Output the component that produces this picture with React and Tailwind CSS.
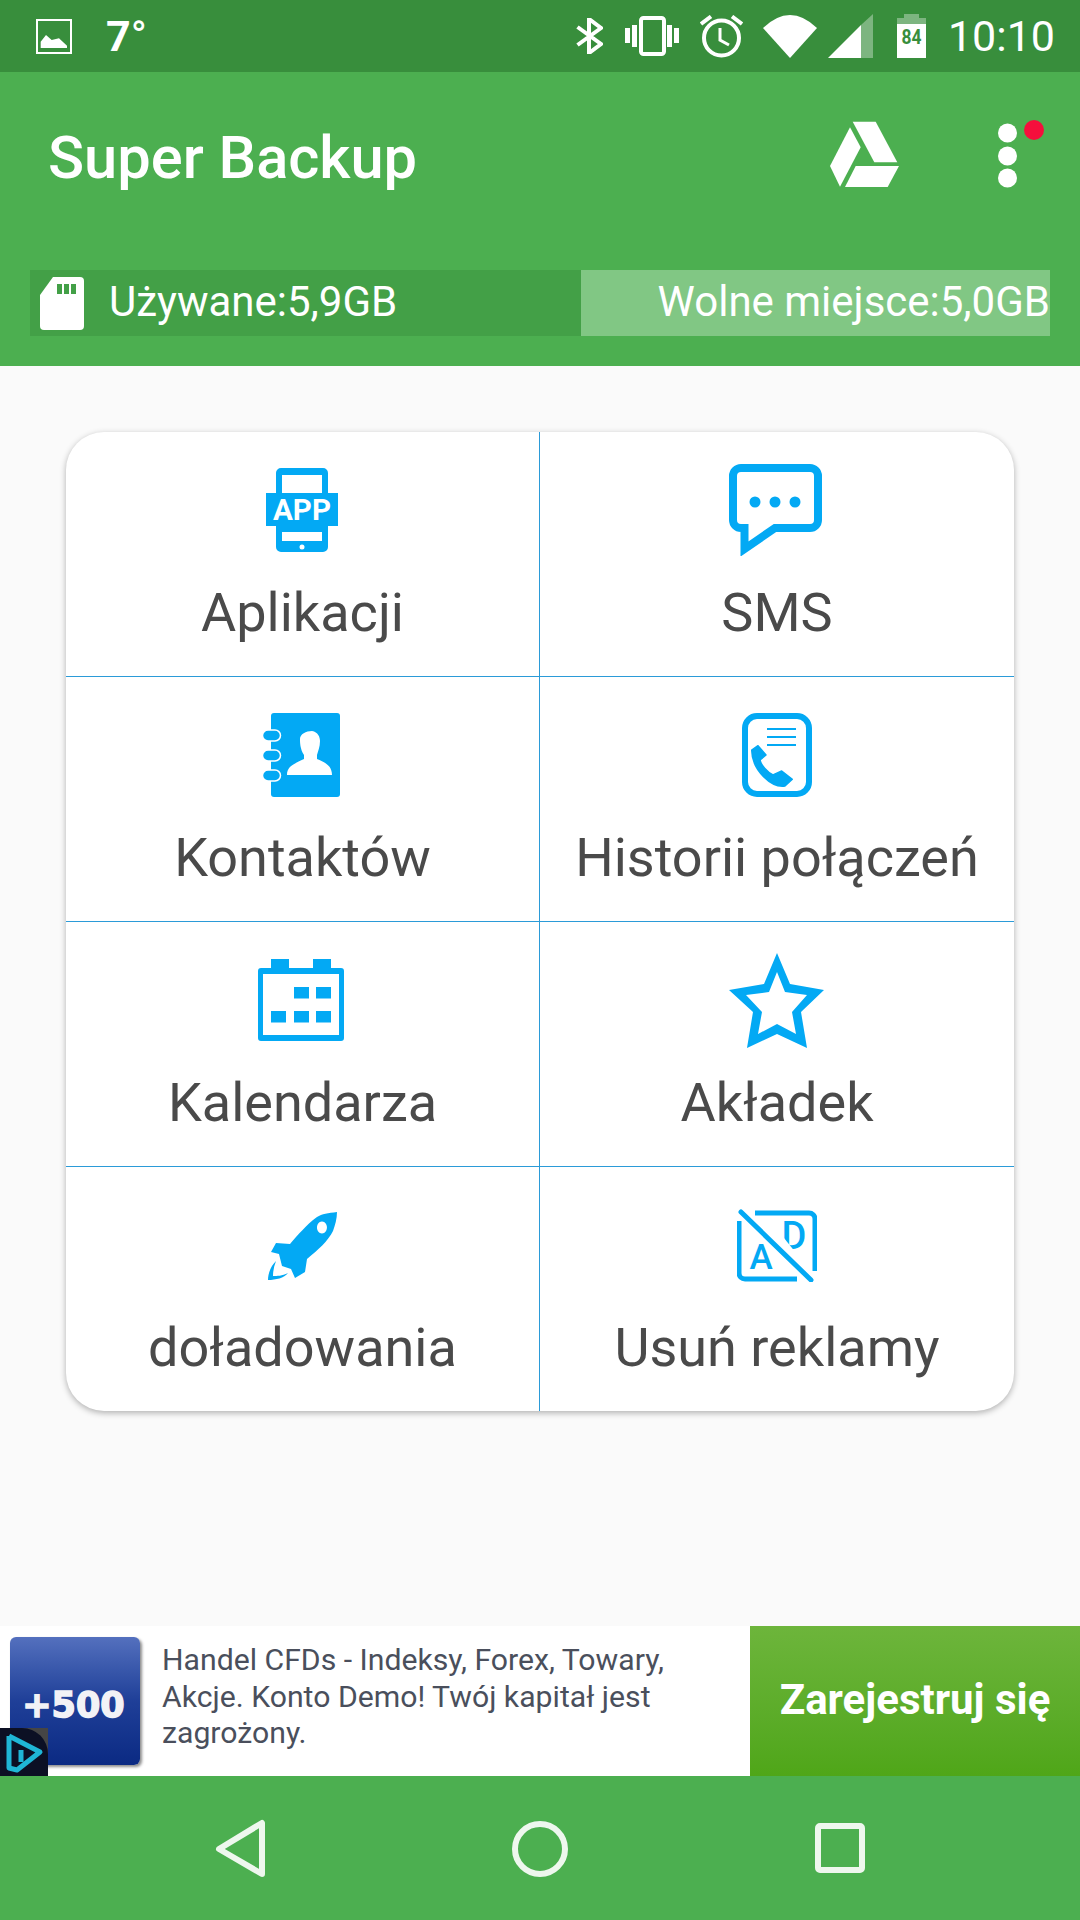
const BLUE = "#03A9F4";

function AppIcon() {
  return (
    <svg className="mr-[2px]" width="72" height="84" viewBox="0 0 72 84">
      <path fillRule="evenodd" fill={BLUE} d="M15 0H57a5 5 0 0 1 5 5V79a5 5 0 0 1-5 5H15a5 5 0 0 1-5-5V5a5 5 0 0 1 5-5ZM16 7V25H56V7ZM16 64V73H56V64Z" />
      <rect x="0" y="25" width="72" height="33" fill={BLUE} />
      <circle cx="36" cy="79" r="2.5" fill="#fff" />
      <text x="36" y="52" textAnchor="middle" fontFamily="Roboto" fontWeight="700" fontSize="29" textLength="58" lengthAdjust="spacingAndGlyphs" fill="#fff">APP</text>
    </svg>
  );
}
function SmsIcon() {
  return (
    <svg className="mr-[3px]" width="93" height="92" viewBox="0 0 93 92">
      <path fill="none" stroke={BLUE} strokeWidth="8" strokeMiterlimit="8" d="M15.5 64H12a8 8 0 0 1-8-8V12a8 8 0 0 1 8-8H81a8 8 0 0 1 8 8V56a8 8 0 0 1-8 8H46L15.5 85Z" />
      <circle cx="26" cy="38" r="5.5" fill={BLUE} />
      <circle cx="46" cy="38" r="5.5" fill={BLUE} />
      <circle cx="66" cy="38" r="5.5" fill={BLUE} />
    </svg>
  );
}
function ContactIcon() {
  return (
    <svg className="mr-[4px]" width="78" height="84" viewBox="0 0 78 84">
      <rect x="9" y="0" width="69" height="84" rx="3" fill={BLUE} />
      {[17, 37, 57].map((y) => (
        <rect key={y} x="0.5" y={y} width="18" height="11" rx="5.5" fill={BLUE} stroke="#fff" strokeWidth="1.5" />
      ))}
      <path fill="#fff" d="M25 62C25 53 32 51 42 46V42C38 36 38 29 38 26 38 21 44 18 50 18 56 19 58 24 58 28 58 34 56 38 55 42V46C62 49 70 52 70 62Z" />
    </svg>
  );
}
function CallIcon() {
  return (
    <svg width="70" height="84" viewBox="0 0 70 84">
      <rect x="3" y="3" width="64" height="78" rx="12" fill="none" stroke={BLUE} strokeWidth="6" />
      <path d="M25 16H54M25 24H54M25 32H54" stroke={BLUE} strokeWidth="2.2" />
      <path fill={BLUE} stroke={BLUE} strokeWidth="1.5" strokeLinejoin="round" d="M9.700 37 16 32.700 24 42 18 47C19 52 25 59 31 62L39.700 58 50.300 66.300 43 73C30 75 10 58 9.700 37Z" />
    </svg>
  );
}
function CalendarIcon() {
  const squares = [[36, 28], [58, 28], [13, 52], [36, 52], [58, 52]];
  return (
    <svg className="mr-[4px]" width="86" height="82" viewBox="0 0 86 82">
      <path fill={BLUE} fillRule="evenodd" d="M13 0H31V9H55V0H73V9H83a3 3 0 0 1 3 3V79a3 3 0 0 1-3 3H3a3 3 0 0 1-3-3V12a3 3 0 0 1 3-3H13ZM5 15V76H81V15Z" />
      {squares.map(([x, y]) => (
        <rect key={`${x}-${y}`} x={x} y={y} width="15" height="11.5" fill={BLUE} />
      ))}
    </svg>
  );
}
function StarIcon() {
  return (
    <svg className="mr-[1px]" width="95" height="95" viewBox="0 0 95 95">
      <path fill={BLUE} fillRule="evenodd" d="M48 0 61 31 95 37 72 59 78 95 48 81 18 95 24 59 0 37 35 31ZM48 19 40 39 17 42 33 59 29 81 48 71 67 81 63 59 78 42 56 39Z" />
    </svg>
  );
}
function RocketIcon() {
  return (
    <svg width="69" height="69" viewBox="0 0 69 69">
      <path fill={BLUE} fillRule="evenodd" d="M69 1C60 2 54 3 49 6 38 14 30 24 22 33L8 32 3 41 11 43 14 55 23 58 27 67 37 61 39 48C50 39 60 30 65 20 67 14 69 8 69 1ZM54 10.500A5 6 0 1 1 53.900 10.500Z" />
      <path fill={BLUE} d="M8 50C3 55 0 62 0 69 8 69 16 67 20 62 14 65 9 65 5 65 5 60 6 55 8 50Z" />
    </svg>
  );
}
function NoAdsIcon() {
  return (
    <svg width="80" height="73" viewBox="0 0 80 73">
      <path fill="none" stroke={BLUE} strokeWidth="5" d="M18 4H72a6 6 0 0 1 6 6V62M60 70H8a6 6 0 0 1-6-6V12" />
      <text x="24" y="60" textAnchor="middle" fontFamily="Roboto" fontWeight="500" fontSize="35" fill={BLUE}>A</text>
      <text x="57" y="40" textAnchor="middle" fontFamily="Roboto" fontWeight="500" fontSize="38" fill={BLUE}>D</text>
      <path d="M43 24 59 44H43Z" fill="#fff" />
      <path d="M3 2 74 72" stroke="#fff" strokeWidth="11" />
      <path d="M4 3 74 71" stroke={BLUE} strokeWidth="5" strokeLinecap="round" />
    </svg>
  );
}

const items = [
  ["Aplikacji", AppIcon],
  ["SMS", SmsIcon],
  ["Kontaktów", ContactIcon],
  ["Historii połączeń", CallIcon],
  ["Kalendarza", CalendarIcon],
  ["Akładek", StarIcon],
  ["doładowania", RocketIcon],
  ["Usuń reklamy", NoAdsIcon],
];

function Cell({ label, Icon, index }) {
  const left = index % 2 === 0;
  const last = index >= 6;
  return (
    <div className={`flex flex-col items-center ${left ? "border-r border-r-[#2b9bd8]" : ""} ${last ? "" : "border-b border-b-[#2b9bd8]"}`}>
      <div className="h-[100px] mt-[28px] flex items-center justify-center">
        <Icon />
      </div>
      <div className="text-[54px] leading-[60px] mt-[23px] text-[#4a4a4a] whitespace-nowrap">{label}</div>
    </div>
  );
}

function StatusBar() {
  return (
    <div className="h-[72px] bg-[#388E3C] flex items-center text-white shrink-0">
      <svg className="ml-[36px]" width="36" height="35" viewBox="0 0 36 35">
        <rect x="1" y="1" width="34" height="33" fill="none" stroke="#fff" strokeWidth="2" />
        <path fill="#fff" d="M4.700 29V22.700L10 16 15.700 21 23 19.300 31 26.700V29Z" />
      </svg>
      <span className="ml-[34px] text-[43px] leading-[72px] font-bold">7</span>
      <span className="text-[43px] leading-[72px] font-normal">°</span>
      <div className="flex-1" />
      <svg width="27" height="36" viewBox="0 0 27 36">
        <path fill="none" stroke="#fff" strokeWidth="4" d="M1.500 9 25 26 13 35V1L25 10 1.500 27" />
      </svg>
      <svg className="ml-[22px]" width="54" height="40" viewBox="0 0 54 40">
        <rect x="16" y="2" width="23" height="36" rx="2.500" fill="none" stroke="#fff" strokeWidth="4" />
        <path fill="#fff" d="M0 12H5V27H0ZM7 9H12V31H7ZM42 9H47V31H42ZM49 12H54V27H49Z" />
      </svg>
      <svg className="ml-[21px]" width="43" height="43" viewBox="0 0 43 43">
        <circle cx="21.500" cy="23" r="17.500" fill="none" stroke="#fff" strokeWidth="4" />
        <path d="M20 13V25L29 30" fill="none" stroke="#fff" strokeWidth="3" />
        <path d="M1 9 11 1.500M42 9 32 1.500" fill="none" stroke="#fff" strokeWidth="4" />
      </svg>
      <svg className="ml-[20px]" width="54" height="43" viewBox="0 0 54 43">
        <path fill="#fff" d="M0 13Q27-13 54 13L27 43Z" />
      </svg>
      <svg className="ml-[11px]" width="45" height="44" viewBox="0 0 45 44">
        <path fill="#fff" d="M0 44 33 11V44Z" />
        <path fill="#fff" fillOpacity="0.35" d="M33 11 45 0V44H33Z" />
      </svg>
      <svg className="ml-[24px]" width="29" height="44" viewBox="0 0 29 44">
        <path fill="#fff" fillOpacity="0.35" d="M7 0H22V4H29V10H0V4H7Z" />
        <path fill="#fff" d="M0 10H29V44H0Z" />
        <text x="14.500" y="30" textAnchor="middle" fontFamily="Roboto" fontWeight="700" fontSize="20" textLength="20" lengthAdjust="spacingAndGlyphs" fill="#388E3C">84</text>
      </svg>
      <span className="ml-[22px] mr-[25px] text-[43px] leading-[72px]">10:10</span>
    </div>
  );
}

function AppBar() {
  return (
    <div className="h-[294px] bg-[#4CAF50] shrink-0 text-white">
      <div className="h-[172px] flex items-center pl-[48px] pr-[34px]">
        <span className="flex-1 text-[59.600px] font-medium leading-[70px]">Super Backup</span>
        <svg className="mb-[8px]" width="69" height="66" viewBox="0 0 69 66">
          <path fill="#fff" d="M22.700 0.700H45.700L67.300 41.300H44.300Z" />
          <path fill="#fff" d="M20 6.300 30.700 26.300 10 65.700 0 45Z" />
          <path fill="#fff" d="M25.700 45H69L57.700 66H15Z" />
        </svg>
        <svg className="ml-[99px] mb-[6px]" width="48" height="70" viewBox="0 0 48 70">
          <circle cx="9.500" cy="13" r="9.500" fill="#fff" />
          <circle cx="9.500" cy="36" r="9.500" fill="#fff" />
          <circle cx="9.500" cy="58" r="9.500" fill="#fff" />
          <circle cx="36" cy="10" r="10" fill="#f50f3c" />
        </svg>
      </div>
      <div className="mt-[26px] mx-[30px] h-[66px] flex text-[42px] leading-[60px]">
        <div className="w-[551px] bg-[#43A047] flex items-center">
          <svg className="ml-[10px]" width="44" height="53" viewBox="0 0 44 53">
            <path fill="#fff" d="M13 0H40a4 4 0 0 1 4 4V49a4 4 0 0 1-4 4H4a4 4 0 0 1-4-4V18Z" />
            <path fill="#43A047" d="M17 7H22V17H17ZM24 7H29V17H24ZM31 7H36V17H31Z" />
          </svg>
          <span className="ml-[25px] mb-[2px]">Używane:5,9GB</span>
        </div>
        <div className="flex-1 bg-[#81C784] flex items-center justify-end">
          <span className="mb-[2px]">Wolne miejsce:5,0GB</span>
        </div>
      </div>
    </div>
  );
}

function Ad() {
  return (
    <div className="h-[150px] bg-white flex relative shrink-0">
      <div className="ml-[10px] mt-[11px] w-[130px] h-[128px] rounded-[6px] bg-gradient-to-b from-[#5470BE] via-[#1F3F98] to-[#0B2A83] shadow-[2px_2px_3px_rgba(0,0,0,0.45)] flex items-center justify-center">
        <span className="text-[35px] leading-[40px] font-bold text-[#f2f2f6] font-['DejaVu_Sans',sans-serif] mt-[8px] mr-[3px] [-webkit-text-stroke:1.5px_#f2f2f6]">+500</span>
      </div>
      <div className="ml-[22px] mt-[16px] w-[540px] text-[30.200px] leading-[36.500px] text-[#4a4f5c]">
        Handel CFDs - Indeksy, Forex, Towary, Akcje. Konto Demo! Twój kapitał jest zagrożony.
      </div>
      <div className="absolute right-0 top-0 bottom-0 w-[330px] bg-gradient-to-b from-[#6DB53B] to-[#4FA618] flex items-center justify-center text-white font-bold text-[42px] pb-[4px]">
        Zarejestruj się
      </div>
      <div className="absolute left-0 bottom-0 w-[48px] h-[48px] bg-[#454545]">
        <div className="w-full h-full bg-[#0c1024] rounded-tr-[26px]">
          <svg width="48" height="48" viewBox="0 0 48 48">
            <path d="M9 8V40L17 42 40 24 9 8" fill="none" stroke="#1fb6d6" strokeWidth="5" strokeLinejoin="round" />
            <path d="M21 22V34" stroke="#1fb6d6" strokeWidth="5" />
          </svg>
        </div>
      </div>
    </div>
  );
}

function NavBar() {
  return (
    <div className="h-[144px] bg-[#4CAF50] flex items-start shrink-0">
      <svg className="ml-[215px] mt-[43px]" width="50" height="60" viewBox="0 0 50 60">
        <path d="M47 4V55L4 30Z" fill="none" stroke="#eef7ee" strokeWidth="6" strokeLinejoin="round" />
      </svg>
      <svg className="ml-[247px] mt-[44px]" width="56" height="58" viewBox="0 0 56 58">
        <circle cx="28" cy="29" r="25" fill="none" stroke="#eef7ee" strokeWidth="6" />
      </svg>
      <svg className="ml-[247px] mt-[47px]" width="50" height="50" viewBox="0 0 50 50">
        <rect x="3" y="3" width="44" height="44" rx="2" fill="none" stroke="#eef7ee" strokeWidth="6" />
      </svg>
    </div>
  );
}

export default function App() {
  return (
    <div className="w-[1080px] h-[1920px] flex flex-col bg-[#fafafa] font-['Roboto',sans-serif] overflow-hidden">
      <StatusBar />
      <AppBar />
      <div className="flex-1 pt-[66px] px-[66px]">
        <div className="h-[979px] rounded-[38px] bg-white shadow-[0_2px_6px_rgba(0,0,0,0.3)] grid grid-cols-2 grid-rows-[245px_245px_245px_244px] overflow-hidden">
          {items.map(([label, Icon], i) => (
            <Cell key={label} label={label} Icon={Icon} index={i} />
          ))}
        </div>
      </div>
      <Ad />
      <NavBar />
    </div>
  );
}
